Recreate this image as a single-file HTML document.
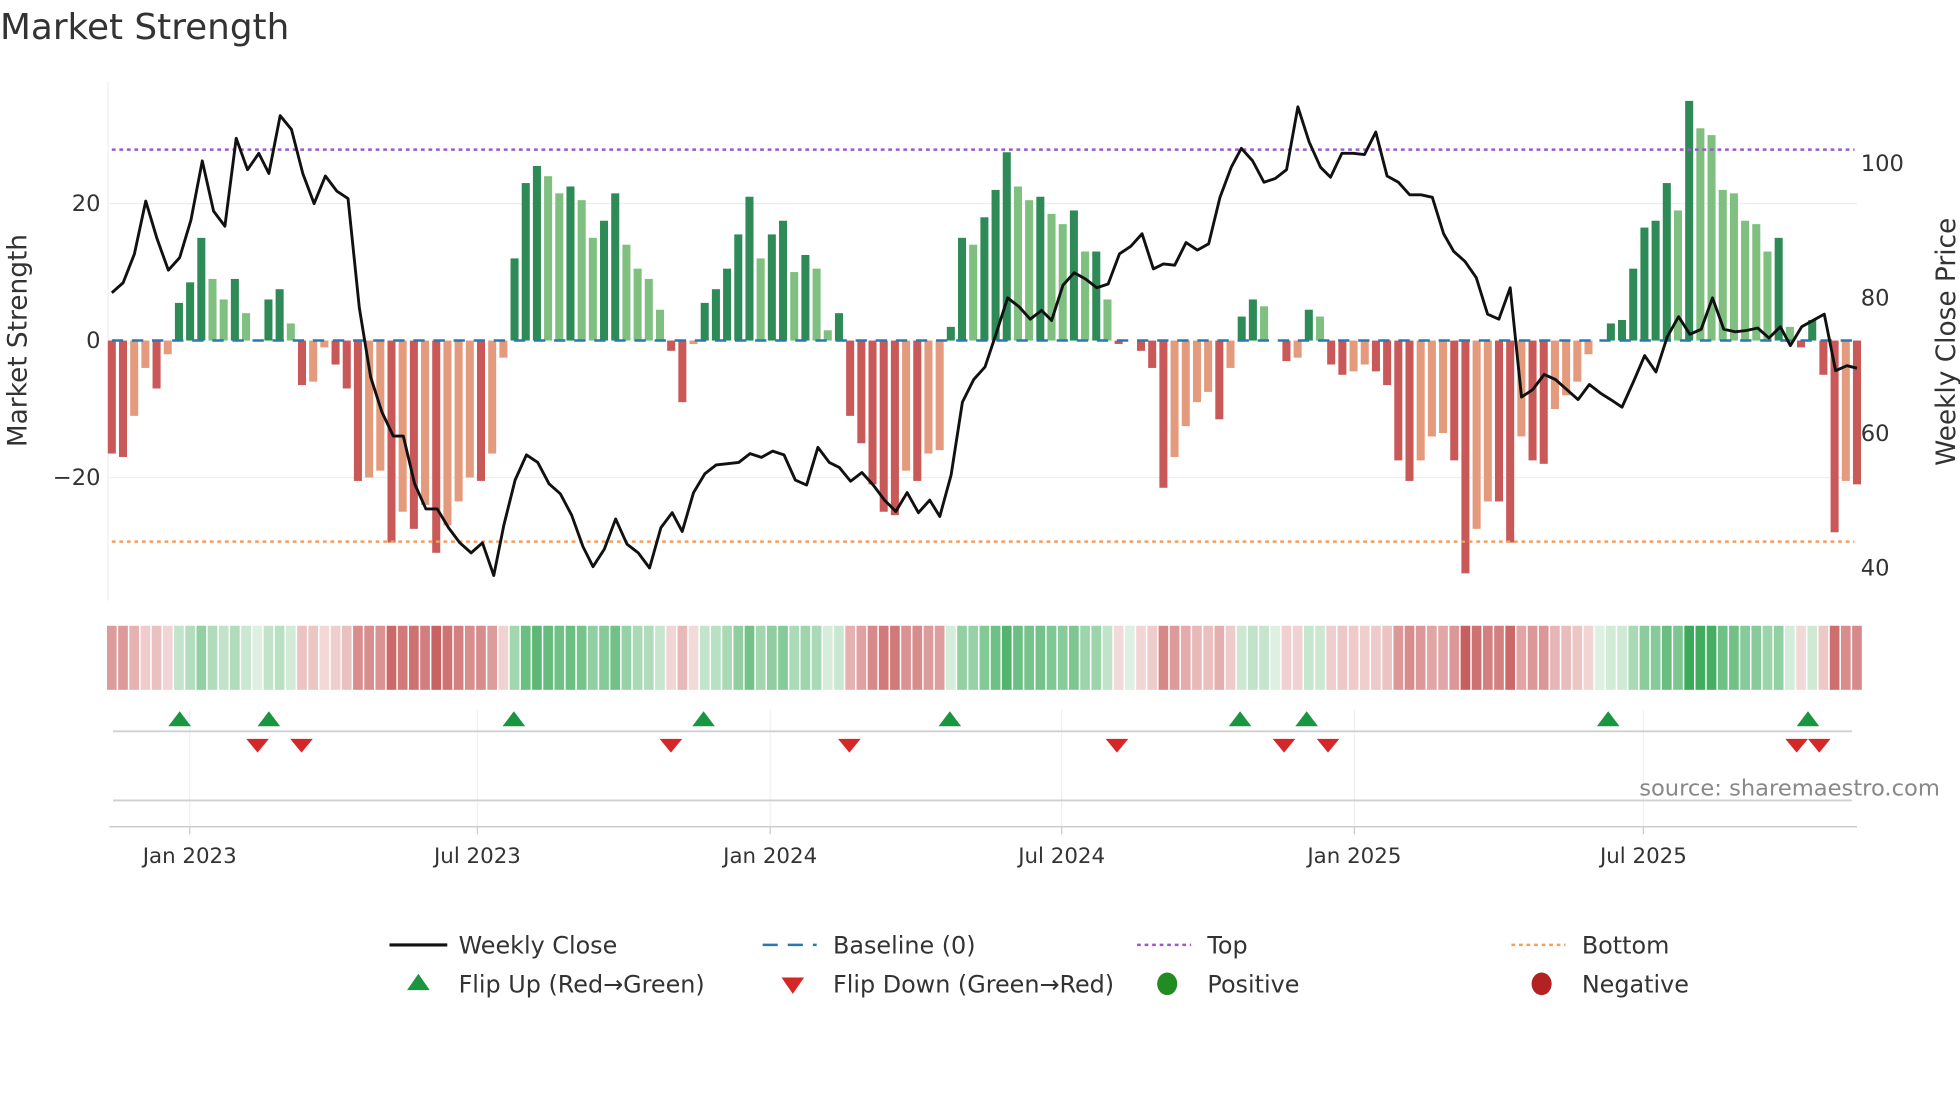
<!DOCTYPE html>
<html><head><meta charset="utf-8"><style>
html,body{margin:0;padding:0;background:#fff;}
svg{display:block;font-family:"DejaVu Sans","Liberation Sans",sans-serif;}
</style></head><body>
<svg id="s" width="1960" height="1102" viewBox="0 0 1560 877" xmlns="http://www.w3.org/2000/svg">
<rect width="1560" height="877" fill="#fff"/>
<text x="0" y="31" font-size="28.5" fill="#333">Market Strength</text>
<line x1="86" y1="65" x2="86" y2="478" stroke="#eee"/>
<line x1="86" y1="162" x2="1478" y2="162" stroke="#eee"/>
<line x1="86" y1="380" x2="1478" y2="380" stroke="#eee"/>
<g font-size="18" fill="#333">
<text x="80" y="168" text-anchor="end">20</text>
<text x="80" y="277" text-anchor="end">0</text>
<text x="80" y="386" text-anchor="end">−20</text>
<text x="1481" y="136">100</text>
<text x="1481" y="243">80</text>
<text x="1481" y="351">60</text>
<text x="1481" y="458">40</text>
<text transform="translate(21,271) rotate(-90)" text-anchor="middle" font-size="21">Market Strength</text>
<text transform="translate(1556,272) rotate(-90)" text-anchor="middle" font-size="21">Weekly Close Price</text>
</g>
<g id="bars"></g>
<line x1="89" y1="119" x2="1476" y2="119" stroke="#9b59d0" stroke-width="2" stroke-dasharray="3,3"/>
<line x1="89" y1="431" x2="1476" y2="431" stroke="#f0a060" stroke-width="2" stroke-dasharray="3,3"/>
<line x1="89" y1="271" x2="1476" y2="271" stroke="#2a78b0" stroke-width="2" stroke-dasharray="9,7"/>
<polyline id="price" fill="none" stroke="#111" stroke-width="2.3" stroke-linejoin="round"/>
<g id="heat"></g>
<g stroke="#eef0f3" stroke-width="1">
<line x1="151" y1="565" x2="151" y2="660"/><line x1="380" y1="565" x2="380" y2="660"/><line x1="613" y1="565" x2="613" y2="660"/><line x1="845" y1="565" x2="845" y2="660"/><line x1="1078" y1="565" x2="1078" y2="660"/><line x1="1308" y1="565" x2="1308" y2="660"/>
</g>
<line x1="90" y1="582" x2="1474" y2="582" stroke="#d0d0d0" stroke-width="1.5"/>
<line x1="90" y1="637" x2="1474" y2="637" stroke="#d0d0d0" stroke-width="1.5"/>
<line x1="87" y1="658" x2="1478" y2="658" stroke="#ccc" stroke-width="1.2"/>
<g id="marks"></g>
<text x="1544" y="633" font-size="18" fill="#888" text-anchor="end">source: sharemaestro.com</text>
<g font-size="17" fill="#333" text-anchor="middle">
<text x="151" y="687">Jan 2023</text><text x="380" y="687">Jul 2023</text><text x="613" y="687">Jan 2024</text><text x="845" y="687">Jul 2024</text><text x="1078" y="687">Jan 2025</text><text x="1308" y="687">Jul 2025</text>
</g>
<g stroke="#ccc"><line x1="151" y1="658" x2="151" y2="664"/><line x1="380" y1="658" x2="380" y2="664"/><line x1="613" y1="658" x2="613" y2="664"/><line x1="845" y1="658" x2="845" y2="664"/><line x1="1078" y1="658" x2="1078" y2="664"/><line x1="1308" y1="658" x2="1308" y2="664"/></g>
<g font-size="19" fill="#333">
<line x1="310" y1="752" x2="356" y2="752" stroke="#111" stroke-width="2.5"/><text x="365" y="759">Weekly Close</text>
<line x1="607" y1="752" x2="650" y2="752" stroke="#2a78b0" stroke-width="2" stroke-dasharray="12,8"/><text x="663" y="759">Baseline (0)</text>
<line x1="905" y1="752" x2="948" y2="752" stroke="#9b59d0" stroke-width="2" stroke-dasharray="3,3"/><text x="961" y="759">Top</text>
<line x1="1203" y1="752" x2="1246" y2="752" stroke="#f0a060" stroke-width="2" stroke-dasharray="3,3"/><text x="1259" y="759">Bottom</text>
<polygon points="324,788 342,788 333,775" fill="#1a9641"/><text x="365" y="790">Flip Up (Red→Green)</text>
<polygon points="622,778 640,778 631,791" fill="#d62728"/><text x="663" y="790">Flip Down (Green→Red)</text>
<ellipse cx="929" cy="783" rx="8" ry="9" fill="#228b22"/><text x="961" y="790">Positive</text>
<ellipse cx="1227" cy="783" rx="8" ry="9" fill="#b22222"/><text x="1259" y="790">Negative</text>
</g>
</svg>
<script>
var NS="http://www.w3.org/2000/svg";
function el(t,a,p){var e=document.createElementNS(NS,t);for(var k in a)e.setAttribute(k,a[k]);p.appendChild(e);return e;}
var v=[-16.5,-17,-11,-4,-7,-2,5.5,8.5,15,9,6,9,4,0,6,7.5,2.5,-6.5,-6,-1,-3.5,-7,-20.5,-20,-19,-29.5,-25,-27.5,-24,-31,-27,-23.5,-20,-20.5,-16.5,-2.5,12,23,25.5,24,21.5,22.5,20.5,15,17.5,21.5,14,10.5,9,4.5,-1.5,-9,-0.5,5.5,7.5,10.5,15.5,21,12,15.5,17.5,10,12.5,10.5,1.5,4,-11,-15,-21,-25,-25.5,-19,-20.5,-16.5,-16,2,15,14,18,22,27.5,22.5,20.5,21,18.5,17,19,13,13,6,-0.5,0,-1.5,-4,-21.5,-17,-12.5,-9,-7.5,-11.5,-4,3.5,6,5,0,-3,-2.5,4.5,3.5,-3.5,-5,-4.5,-3.5,-4.5,-6.5,-17.5,-20.5,-17.5,-14,-13.5,-17.5,-34,-27.5,-23.5,-23.5,-29.5,-14,-17.5,-18,-10,-8,-6,-2,0,2.5,3,10.5,16.5,17.5,23,19,35,31,30,22,21.5,17.5,17,13,15,2,-1,3,-5,-28,-20.5,-21];
var n=v.length,x0=89,x1=1478,dx=(x1-x0)/(n-1);
var bars=document.getElementById('bars'),heat=document.getElementById('heat');
function mix(a,b,t){return 'rgb('+a.map(function(c,i){return Math.round(c+(b[i]-c)*t)}).join(',')+')';}
for(var i=0;i<n;i++){
 var x=x0+i*dx,val=v[i],prev=i?v[i-1]:0,h=Math.abs(val)*5.45;
 var col;
 if(val>=0){col=(val>=prev)?'#2e8b57':'#7fbf7f';}else{col=(val<=prev)?'#c95858':'#e49a7c';}
 if(h>0.3)el('rect',{x:x-3.2,y:val>=0?271-h:271,width:6.4,height:h,fill:col},bars);
 var t=Math.min(1,Math.abs(val)/32);
 var hc=val>=0?mix([222,240,226],[60,170,90],t):mix([244,220,220],[200,95,95],t);
 el('rect',{x:x-dx/2+0.6,y:498,width:dx-1.2,height:51,fill:hc},heat);
}
var p=[89,233,98,225,107,202,116,160,125,190,134,215,143,205,152,175,161,128,170,168,179,180,188,110,197,135,206,122,214,138,223,92,232,103,241,138,250,162,259,140,268,152,277,158,286,245,295,300,304,328,313,347,321,347,330,385,339,405,348,405,357,420,366,432,375,440,384,432,393,458,401,418,410,382,419,362,428,368,437,385,446,393,455,410,464,435,472,451,481,437,490,413,499,433,508,440,517,452,526,420,535,408,543,423,552,392,561,377,570,370,579,369,588,368,597,361,606,364,615,359,624,362,633,382,642,386,651,356,660,368,668,372,677,383,686,376,695,386,704,398,713,407,722,392,731,408,740,398,748,411,757,378,766,320,775,302,784,292,793,265,802,237,811,244,820,254,829,247,837,255,846,227,855,217,864,222,873,229,882,226,891,202,900,196,909,186,918,214,926,210,935,211,944,193,953,199,962,194,971,157,980,133,988,118,997,128,1006,145,1015,142,1024,135,1033,85,1042,113,1051,133,1059,141,1068,122,1077,122,1086,123,1095,105,1104,140,1113,145,1122,155,1131,155,1140,157,1149,186,1157,200,1166,208,1175,221,1184,250,1193,254,1202,229,1211,316,1220,310,1229,298,1238,302,1247,310,1256,318,1265,306,1274,313,1282,318,1291,324,1300,304,1309,283,1318,296,1327,268,1336,252,1345,266,1354,262,1363,237,1372,262,1381,264,1390,263,1399,261,1408,269,1417,260,1425,275,1434,260,1443,255,1452,250,1461,295,1470,291,1478,293];
var s='';for(var k=0;k<p.length;k+=2)s+=p[k]+','+p[k+1]+' ';
document.getElementById('price').setAttribute('points',s);
var m=document.getElementById('marks');
[143,214,409,560,756,987,1040,1280,1439].forEach(function(x){el('polygon',{points:(x-9)+',578 '+(x+9)+',578 '+x+',566',fill:'#1a9641'},m);});
[205,240,534,676,889,1022,1057,1430,1448].forEach(function(x){el('polygon',{points:(x-9)+',588 '+(x+9)+',588 '+x+',599',fill:'#d62728'},m);});
</script>
</body></html>
